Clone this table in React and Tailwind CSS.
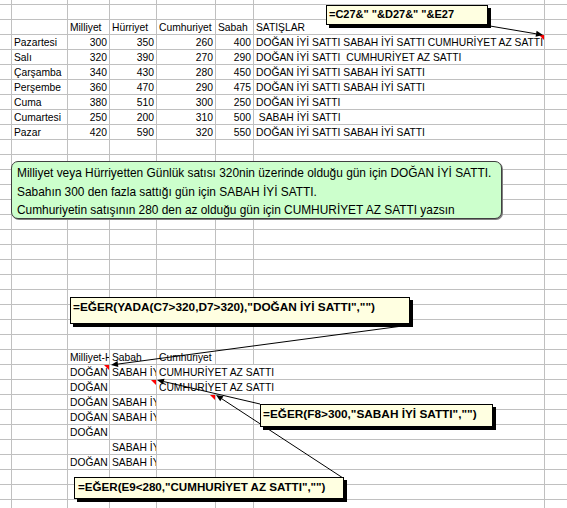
import React from "react";

const ROW = "flex h-[15px] shrink-0 border-b border-[#c0c0c0]";
const CELL = "shrink-0 border-r border-[#c0c0c0] px-[2px] leading-[16px] whitespace-pre overflow-x-clip";

function Row({ cells }) {
  return (
    <div className={ROW}>
      {cells.map((c, i) => (
        <div key={i} className={`${c[0]} ${CELL} ${c[2] || ""}`}>
          {c[1]}
        </div>
      ))}
      <div className="flex-1" />
    </div>
  );
}

const A = "w-[12px]";
const B = "w-[56px]";
const C = "w-[42px]";
const D = "w-[47px]";
const E = "w-[59px]";
const F = "w-[38px]";
const G = "w-[291px]";
const EFG = "w-[388px]";
const R = "text-right";

const emptyRow = [[A, ""], [B, ""], [C, ""], [D, ""], [E, ""], [F, ""], [G, ""]];

const days = [
  ["Pazartesi", 300, 350, 260, 400, "DOĞAN İYİ SATTI SABAH İYİ SATTI CUMHURİYET AZ SATTI"],
  ["Salı", 320, 390, 270, 290, "DOĞAN İYİ SATTI  CUMHURİYET AZ SATTI"],
  ["Çarşamba", 340, 430, 280, 450, "DOĞAN İYİ SATTI SABAH İYİ SATTI"],
  ["Perşembe", 360, 470, 290, 475, "DOĞAN İYİ SATTI SABAH İYİ SATTI"],
  ["Cuma", 380, 510, 300, 250, "DOĞAN İYİ SATTI"],
  ["Cumartesi", 250, 200, 310, 500, " SABAH İYİ SATTI"],
  ["Pazar", 420, 590, 320, 550, "DOĞAN İYİ SATTI SABAH İYİ SATTI"],
];

const DG = "DOĞAN İYİ SATTI";
const SB = "SABAH İYİ SATTI";
const CM = "CUMHURİYET AZ SATTI";

const lower = [
  [DG, SB, CM],
  [DG, "", CM],
  [DG, SB, ""],
  [DG, SB, ""],
  [DG, "", ""],
  ["", SB, ""],
  [DG, SB, ""],
];

function Arrow({ x1, y1, x2, y2 }) {
  const a = Math.atan2(y2 - y1, x2 - x1);
  const L = 7;
  const W = 3;
  const c = Math.cos(a);
  const s = Math.sin(a);
  const bx = x2 - L * c;
  const by = y2 - L * s;
  const pts = `${x2},${y2} ${bx + W * s},${by - W * c} ${bx - W * s},${by + W * c}`;
  return (
    <g>
      <line x1={x1} y1={y1} x2={bx} y2={by} stroke="#000" strokeWidth="1" />
      <polygon points={pts} fill="#000" />
    </g>
  );
}

function RedTri({ x, y }) {
  return <polygon points={`${x - 5},${y} ${x},${y} ${x},${y + 5}`} fill="#ff0000" />;
}

export default function App() {
  const rows = [];
  rows.push(emptyRow);
  rows.push([[A, ""], [B, ""], [C, "Milliyet"], [D, "Hürriyet"], [E, "Cumhuriyet"], [F, "Sabah"], [G, "SATIŞLAR"]]);
  days.forEach((d) => {
    rows.push([[A, ""], [B, d[0]], [C, String(d[1]), R], [D, String(d[2]), R], [E, String(d[3]), R], [F, String(d[4]), R], [G, d[5]]]);
  });
  for (let i = 0; i < 14; i++) rows.push(emptyRow);
  rows.push([[A, ""], [B, ""], [C, "Milliyet-Hürriyet"], [D, "Sabah"], [E, "Cumhuriyet"], [F, ""], [G, ""]]);
  lower.forEach((l) => {
    if (l[2]) {
      rows.push([[A, ""], [B, ""], [C, l[0]], [D, l[1]], [EFG, l[2]]]);
    } else {
      rows.push([[A, ""], [B, ""], [C, l[0]], [D, l[1]], [E, ""], [F, ""], [G, ""]]);
    }
  });
  for (let i = 0; i < 4; i++) rows.push(emptyRow);

  return (
    <div className="relative w-[567px] h-[508px] overflow-hidden bg-white text-black text-[10.3px] font-['Liberation_Sans',Arial,sans-serif]">
      <div className="flex flex-col">
        <div className="flex h-[5px] shrink-0 border-b border-[#c0c0c0]">
          <div className="w-[12px] shrink-0 border-r border-[#c0c0c0]" />
          <div className="w-[56px] shrink-0 border-r border-[#c0c0c0]" />
          <div className="w-[42px] shrink-0 border-r border-[#c0c0c0]" />
          <div className="w-[47px] shrink-0 border-r border-[#c0c0c0]" />
          <div className="w-[59px] shrink-0 border-r border-[#c0c0c0]" />
          <div className="w-[38px] shrink-0 border-r border-[#c0c0c0]" />
          <div className="w-[291px] shrink-0 border-r border-[#c0c0c0]" />
        </div>
        {rows.map((r, i) => (
          <Row key={i} cells={r} />
        ))}
      </div>

      <div className="absolute left-[11px] top-[161px] w-[491px] h-[58px] rounded-[7px] border border-[#404040] bg-[#ccffcc] px-[5px] pt-[2px] text-[11.9px] leading-[18.5px] shadow-[1px_1px_0_#808080]">
        <div>Milliyet veya Hürriyetten Günlük satısı 320nin üzerinde olduğu gün için DOĞAN İYİ SATTI.</div>
        <div>Sabahın 300 den fazla sattığı gün için SABAH İYİ SATTI.</div>
        <div>Cumhuriyetin satışının 280 den az olduğu gün için CUMHURİYET AZ SATTI yazsın</div>
      </div>

      <svg className="absolute left-0 top-0 pointer-events-none" width="567" height="508" viewBox="0 0 567 508">
        <RedTri x={544} y={35} />
        <RedTri x={109} y={365} />
        <RedTri x={156} y={380} />
        <RedTri x={215} y={395} />
        <Arrow x1={490} y1={26} x2={543} y2={35} />
        <Arrow x1={410} y1={325} x2={111} y2={365} />
        <Arrow x1={260} y1={404} x2={157} y2={380} />
        <Arrow x1={343} y1={478} x2={216} y2={395} />
      </svg>

      <div className="absolute left-[326px] top-[5px] w-[162px] h-[20px] border border-black bg-[#ffffe1] shadow-[3px_3px_0_#000] px-[2px] text-[11px] font-bold leading-[16px] whitespace-pre">
        {'=C27&" "&D27&" "&E27'}
      </div>
      <div className="absolute left-[70px] top-[297px] w-[340px] h-[27px] border border-black bg-[#ffffe1] shadow-[3px_3px_0_#000] px-[2px] pt-[1px] text-[11.8px] font-bold leading-[16px] whitespace-pre">
        {'=EĞER(YADA(C7>320,D7>320),"DOĞAN İYİ SATTI","")'}
      </div>
      <div className="absolute left-[260px] top-[404px] w-[233px] h-[23px] border border-black bg-[#ffffe1] shadow-[3px_3px_0_#000] px-[2px] pt-[1px] text-[11.8px] font-bold leading-[16px] whitespace-pre">
        {'=EĞER(F8>300,"SABAH İYİ SATTI","")'}
      </div>
      <div className="absolute left-[74px] top-[477px] w-[270px] h-[22px] border border-black bg-[#ffffe1] shadow-[3px_3px_0_#000] px-[3px] pt-[1px] text-[11.6px] font-bold leading-[16px] whitespace-pre">
        {'=EĞER(E9<280,"CUMHURİYET AZ SATTI","")'}
      </div>
    </div>
  );
}
